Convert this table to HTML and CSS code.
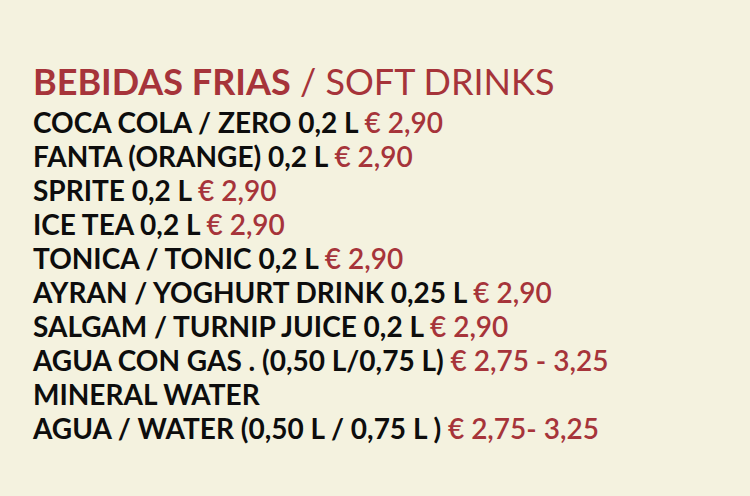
FILE: index.html
```html
<!DOCTYPE html>
<html lang="en">
<head>
    <meta charset="UTF-8">
    <meta name="viewport" content="width=device-width, initial-scale=1.0">
    <title>Bebidas Frias</title>
    <link rel="stylesheet" href="styles.css">
</head>
<body>
    <div class="menu">
        <h2 class="menu-title"><strong>BEBIDAS FRIAS</strong> / SOFT DRINKS</h2>
        <ul class="menu-list">
            <li>COCA COLA / ZERO 0,2 L <span class="price">€ 2,90</span></li>
            <li>FANTA (ORANGE) 0,2 L <span class="price">€ 2,90</span></li>
            <li>SPRITE 0,2 L <span class="price">€ 2,90</span></li>
            <li>ICE TEA 0,2 L <span class="price">€ 2,90</span></li>
            <li>TONICA / TONIC 0,2 L <span class="price">€ 2,90</span></li>
            <li>AYRAN / YOGHURT DRINK 0,25 L <span class="price">€ 2,90</span></li>
            <li>SALGAM / TURNIP JUICE 0,2 L <span class="price">€ 2,90</span></li>
            <li>AGUA CON GAS . (0,50 L/0,75 L) <span class="price">€ 2,75 - 3,25</span></li>
            <li>MINERAL WATER</li>
            <li>AGUA / WATER (0,50 L / 0,75 L ) <span class="price">€ 2,75- 3,25</span></li>
        </ul>
    </div>
</body>
</html>
```

FILE: styles.css
```css
* {
    margin: 0;
    padding: 0;
    box-sizing: border-box;
    font-family: Lato, 'Open Sans', sans-serif;
}

body {
    background: #f4f2df;
    min-height: 100vh;
}

.menu {
    padding: 57px 33px 0;
}

.menu-title {
    color: #a6343a;
    font-size: 36px;
    font-weight: 400;
    line-height: 48px;
}

.menu-title strong {
    font-weight: 700;
}

.menu-list {
    list-style: none;
}

.menu-list li {
    color: #0d0d0d;
    font-size: 28px;
    font-weight: 700;
    line-height: 34px;
}

.price {
    color: #a6343a;
    font-weight: 600;
}
```
